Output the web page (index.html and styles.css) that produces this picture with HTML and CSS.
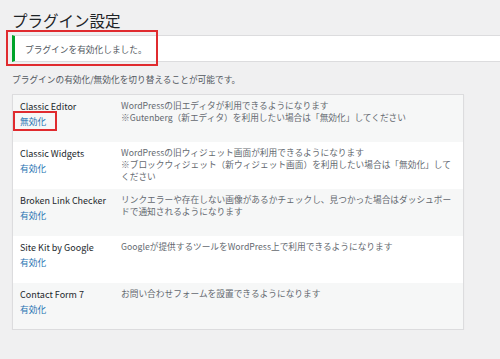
FILE: index.html
```html
<!DOCTYPE html>
<html lang="ja">
<head>
    <meta charset="UTF-8">
    <meta name="viewport" content="width=device-width, initial-scale=1.0">
    <title>プラグイン設定</title>
    <link rel="stylesheet" href="styles.css">
</head>
<body>
    <div class="wrap">
        <h1>プラグイン設定</h1>

        <div class="notice marked-box">
            <p>プラグインを有効化しました。</p>
        </div>

        <p class="lead">プラグインの有効化/無効化を切り替えることが可能です。</p>

        <table class="plugins">
            <tr>
                <td class="name">
                    <strong>Classic Editor</strong>
                    <a href="#" class="marked-link">無効化</a>
                </td>
                <td class="desc">WordPressの旧エディタが利用できるようになります<br>※Gutenberg（新エディタ）を利用したい場合は「無効化」してください</td>
            </tr>
            <tr>
                <td class="name">
                    <strong>Classic Widgets</strong>
                    <a href="#">有効化</a>
                </td>
                <td class="desc">WordPressの旧ウィジェット画面が利用できるようになります<br>※ブロックウィジェット（新ウィジェット画面）を利用したい場合は「無効化」して<br>ください</td>
            </tr>
            <tr>
                <td class="name">
                    <strong>Broken Link Checker</strong>
                    <a href="#">有効化</a>
                </td>
                <td class="desc">リンクエラーや存在しない画像があるかチェックし、見つかった場合はダッシュボー<br>ドで通知されるようになります</td>
            </tr>
            <tr>
                <td class="name">
                    <strong>Site Kit by Google</strong>
                    <a href="#">有効化</a>
                </td>
                <td class="desc">Googleが提供するツールをWordPress上で利用できるようになります</td>
            </tr>
            <tr>
                <td class="name">
                    <strong>Contact Form 7</strong>
                    <a href="#">有効化</a>
                </td>
                <td class="desc">お問い合わせフォームを設置できるようになります</td>
            </tr>
        </table>
    </div>
</body>
</html>
```

FILE: styles.css
```css
html, body {
    margin: 0;
    padding: 0;
}
body {
    background-color: #f0f0f1;
    font-family: "Noto Sans CJK JP", "Noto Sans", sans-serif;
    color: #3c434a;
    overflow: hidden;
}
.wrap {
    padding: 10px 0 0 12px;
}
h1 {
    margin: 0;
    font-size: 15.5px;
    line-height: 20px;
    font-weight: 400;
    color: #1d2327;
}
.notice {
    margin-top: 5px;
    height: 25px;
    background: #fff;
    border-top: 1px solid #dcdcde;
    border-bottom: 1px solid #dcdcde;
    border-left: 3px solid #00a32a;
    box-sizing: content-box;
}
.notice p {
    margin: 0;
    padding: 7px 0 0 10px;
    font-size: 8.7px;
    line-height: 13px;
    color: #50575e;
}
.marked-box,
.marked-link {
    position: relative;
}
.marked-box::after {
    content: "";
    position: absolute;
    left: -9px;
    top: -6px;
    width: 148px;
    height: 32px;
    border: 2px solid #e02b2f;
}
.lead {
    margin: 11px 0 0;
    font-size: 8.7px;
    line-height: 14px;
    color: #50575e;
}
.plugins {
    margin-top: 7px;
    width: 452px;
    border-collapse: collapse;
    border: 1px solid #dcdcde;
    box-shadow: 0 1px 1px rgba(0,0,0,0.06);
}
.plugins tr {
    height: 47px;
    background: #fff;
}
.plugins tr:nth-child(odd) {
    background: #f6f7f7;
}
.plugins td {
    vertical-align: top;
    padding: 5px 0 0;
}
.name {
    width: 100px;
    padding-left: 7px !important;
    font-size: 8.7px;
    line-height: 14px;
}
.name strong {
    display: block;
    font-weight: 400;
    font-size: 9px;
    line-height: 14px;
    color: #23282d;
}
.name a {
    display: inline-block;
    font-size: 8.7px;
    line-height: 15px;
    color: #2271b1;
    text-decoration: none;
}
.marked-link::after {
    content: "";
    position: absolute;
    left: -7px;
    top: -3px;
    width: 40px;
    height: 16px;
    border: 2px solid #e02b2f;
}
.desc {
    padding-left: 1px !important;
    font-size: 8.7px;
    line-height: 12px;
    color: #646970;
    white-space: nowrap;
}
```
